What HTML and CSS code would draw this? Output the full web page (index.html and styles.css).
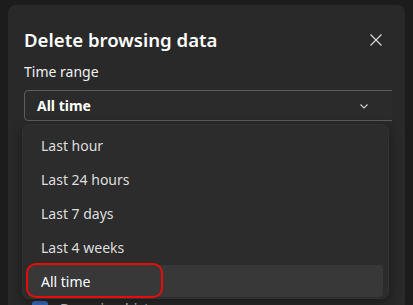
FILE: index.html
```html
<!DOCTYPE html>
<html lang="en">
<head>
  <meta charset="UTF-8">
  <meta name="viewport" content="width=device-width, initial-scale=1.0">
  <title>Delete browsing data</title>
  <link rel="stylesheet" href="styles.css">
</head>
<body>
  <div class="panel">
    <div class="header">
      <h1>Delete browsing data</h1>
      <button class="close" aria-label="Close">
        <svg width="12" height="12" viewBox="0 0 12 12"><path d="M0.5 0.5L11.5 11.5M11.5 0.5L0.5 11.5" stroke="#d6d6d6" stroke-width="1.2" fill="none"/></svg>
      </button>
    </div>
    <div class="content">
      <label class="field-label">Time range</label>
      <div class="select">
        <span>All time</span>
        <svg class="chevron" width="8" height="5" viewBox="0 0 8 5"><path d="M0.5 0.5L4 4L7.5 0.5" stroke="#cfcfcf" stroke-width="1.1" fill="none"/></svg>
      </div>
      <div class="check-row">
        <span class="checkbox"></span>
        <span>Browsing history</span>
      </div>
    </div>
    <ul class="dropdown">
      <li>Last hour</li>
      <li>Last 24 hours</li>
      <li>Last 7 days</li>
      <li>Last 4 weeks</li>
      <li class="selected">All time<span class="marker"></span></li>
    </ul>
  </div>
</body>
</html>
```
FILE: styles.css
```css
body {
  margin: 0;
  background-color: #1c1c1c;
  font-family: "Segoe UI", "Noto Sans", Arial, sans-serif;
  color: #fff;
  height: 305px;
  overflow: hidden;
}
.panel {
  position: relative;
  margin: 5px 0 0 8px;
  width: 397px;
  height: 310px;
  background-color: #292929;
  border-radius: 8px;
  overflow: hidden;
}
.header {
  display: flex;
  justify-content: space-between;
  align-items: center;
  padding: 23px 23px 0 16px;
}
.header h1 {
  margin: 0;
  font-size: 18.6px;
  font-weight: 600;
  line-height: 24px;
}
.close {
  background: none;
  border: none;
  padding: 0;
  width: 12px;
  height: 12px;
  display: flex;
}
.content {
  margin-left: 16px;
  width: 368px;
  overflow: hidden;
}
.field-label {
  display: block;
  margin-top: 10px;
  font-size: 14px;
  line-height: 20px;
  color: #f0f0f0;
}
.select {
  margin-top: 8px;
  width: 380px;
  height: 29px;
  box-sizing: content-box;
  border: 1px solid #5c5c5c;
  border-radius: 4px;
  background-color: #2b2b2b;
  display: flex;
  align-items: center;
  padding-left: 12px;
  font-size: 14px;
  font-weight: 700;
  position: relative;
}
.chevron {
  position: absolute;
  left: 335px;
  top: 13px;
}
.check-row {
  display: flex;
  align-items: center;
  gap: 12px;
  margin-top: 178px;
  margin-left: 8px;
  font-size: 14px;
  color: #cfcfcf;
}
.checkbox {
  width: 16px;
  height: 16px;
  border-radius: 3px;
  background-color: #3a6fc4;
}
.dropdown {
  position: absolute;
  left: 14px;
  top: 119px;
  width: 367px;
  margin: 0;
  padding: 4px 5px 1px;
  box-sizing: border-box;
  list-style: none;
  display: flex;
  flex-direction: column;
  gap: 2px;
  background-color: #2c2c2c;
  border: 1px solid #323232;
  border-radius: 7px;
  box-shadow: 0 4px 12px rgba(0, 0, 0, 0.4);
}
.dropdown li {
  position: relative;
  height: 32px;
  padding-left: 13px;
  display: flex;
  align-items: center;
  font-size: 14px;
  color: #dedede;
  border-radius: 4px;
}
.dropdown li.selected {
  background-color: #383838;
  color: #fff;
}
.marker {
  position: absolute;
  left: -2px;
  top: -2px;
  width: 133px;
  height: 31px;
  border: 2.5px solid #ec0a0a;
  border-radius: 10px;
}
```
